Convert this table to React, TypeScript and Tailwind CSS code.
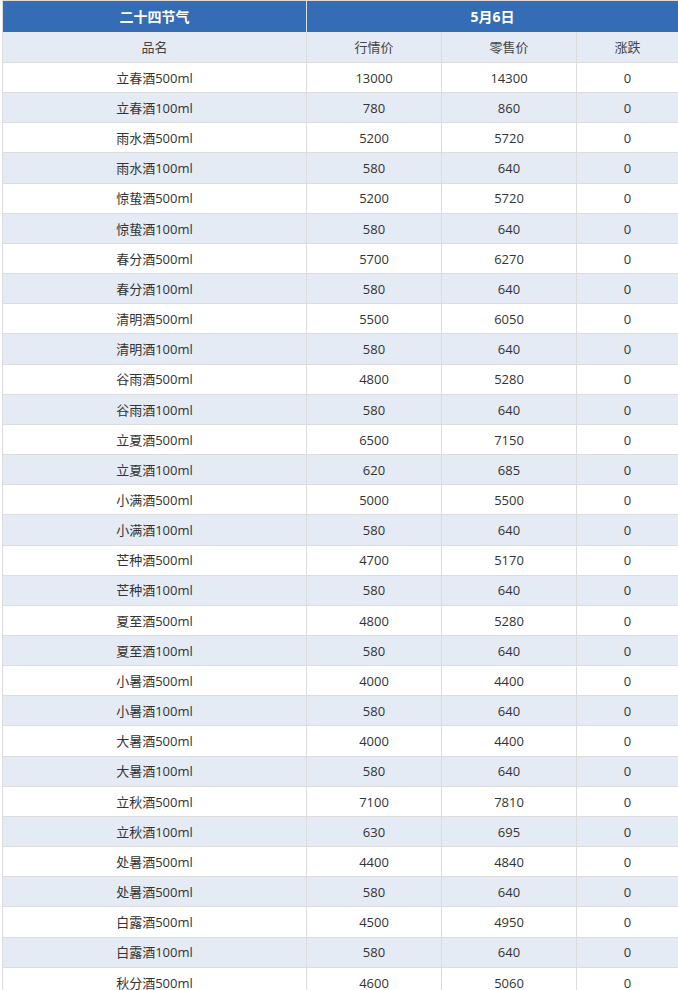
import React from 'react';

// Price rows: name, market price, retail price, change
type Row = [string, string, string, string];

const rows: Row[] = [
  ['立春酒500ml', '13000', '14300', '0'],
  ['立春酒100ml', '780', '860', '0'],
  ['雨水酒500ml', '5200', '5720', '0'],
  ['雨水酒100ml', '580', '640', '0'],
  ['惊蛰酒500ml', '5200', '5720', '0'],
  ['惊蛰酒100ml', '580', '640', '0'],
  ['春分酒500ml', '5700', '6270', '0'],
  ['春分酒100ml', '580', '640', '0'],
  ['清明酒500ml', '5500', '6050', '0'],
  ['清明酒100ml', '580', '640', '0'],
  ['谷雨酒500ml', '4800', '5280', '0'],
  ['谷雨酒100ml', '580', '640', '0'],
  ['立夏酒500ml', '6500', '7150', '0'],
  ['立夏酒100ml', '620', '685', '0'],
  ['小满酒500ml', '5000', '5500', '0'],
  ['小满酒100ml', '580', '640', '0'],
  ['芒种酒500ml', '4700', '5170', '0'],
  ['芒种酒100ml', '580', '640', '0'],
  ['夏至酒500ml', '4800', '5280', '0'],
  ['夏至酒100ml', '580', '640', '0'],
  ['小暑酒500ml', '4000', '4400', '0'],
  ['小暑酒100ml', '580', '640', '0'],
  ['大暑酒500ml', '4000', '4400', '0'],
  ['大暑酒100ml', '580', '640', '0'],
  ['立秋酒500ml', '7100', '7810', '0'],
  ['立秋酒100ml', '630', '695', '0'],
  ['处暑酒500ml', '4400', '4840', '0'],
  ['处暑酒500ml', '580', '640', '0'],
  ['白露酒500ml', '4500', '4950', '0'],
  ['白露酒100ml', '580', '640', '0'],
  ['秋分酒500ml', '4600', '5060', '0'],
];

const cols = ['w-[304px]', 'w-[135px]', 'w-[135px]', 'flex-1'];

const App: React.FC = () => {
  return (
    <div className="h-[990px] w-full overflow-hidden bg-white pl-[2px] font-['Open_Sans','Noto_Sans_CJK_SC',sans-serif] text-[13px] text-[#333]">
      <div className="w-[676px] border-l border-t border-[#dcdcdc]">
        {/* Title row */}
        <div className="flex h-[31px] bg-[#346db6] text-[14px] font-bold text-white">
          <div className="flex w-[304px] items-center justify-center border-r border-[#dcdcdc]">二十四节气</div>
          <div className="flex flex-1 items-center justify-center">5月6日</div>
        </div>

        {/* Column headings */}
        <div className="flex h-[31px] border-b border-[#dcdcdc] bg-[#e4ebf5] text-[#444]">
          {['品名', '行情价', '零售价', '涨跌'].map((h, i) => (
            <div key={h} className={`${cols[i]} flex items-center justify-center pt-[2px] ${i < 3 ? 'border-r border-[#dcdcdc]' : ''}`}>
              {h}
            </div>
          ))}
        </div>

        {/* Body */}
        {rows.map((r, idx) => (
          <div
            key={idx}
            className={`flex h-[30.17px] border-b border-[#dcdcdc] ${idx % 2 === 1 ? 'bg-[#e4ebf5]' : 'bg-white'}`}
          >
            {r.map((c, i) => (
              <div key={i} className={`${cols[i]} flex items-center justify-center pt-[2px] ${i < 3 ? 'border-r border-[#dcdcdc]' : ''}`}>
                {c}
              </div>
            ))}
          </div>
        ))}
      </div>
    </div>
  );
};

export default App;
